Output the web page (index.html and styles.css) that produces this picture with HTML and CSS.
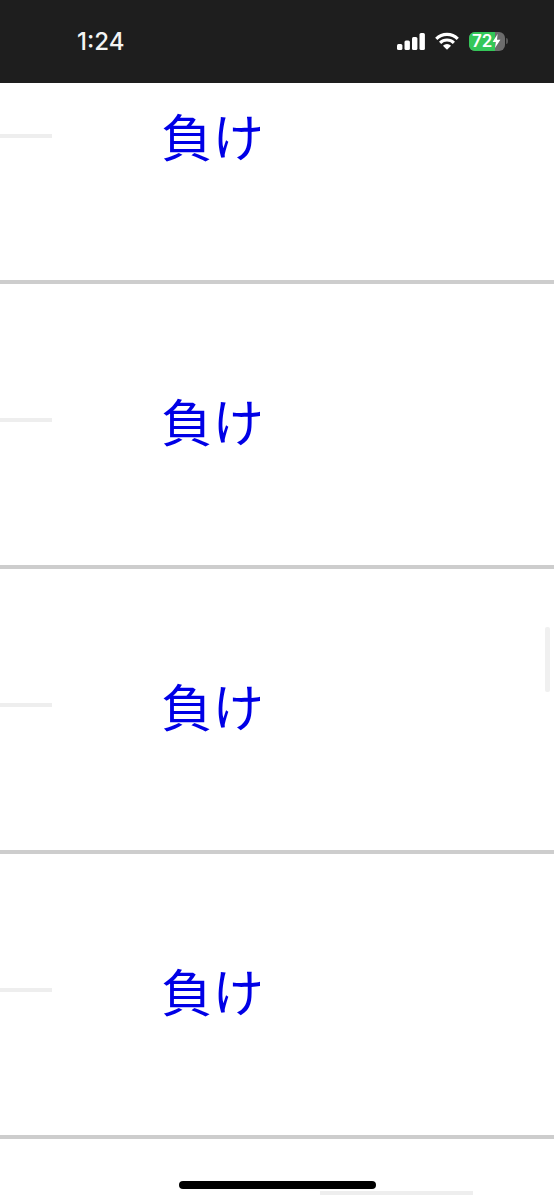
FILE: index.html
```html
<!DOCTYPE html>
<html lang="ja">
<head>
<meta charset="utf-8">
<title>負け</title>
<link rel="stylesheet" href="styles.css">
</head>
<body>
<header class="status">
  <span class="time">1:24</span>
  <div class="status-icons">
    <svg class="signal" width="28" height="17" viewBox="0 0 28 17"><rect x="0" y="11" width="5.4" height="6" rx="1.5"/><rect x="7.5" y="7.5" width="5.4" height="9.5" rx="1.5"/><rect x="15" y="4" width="5.4" height="13" rx="1.5"/><rect x="22.5" y="0" width="5.4" height="17" rx="1.5"/></svg>
    <svg class="wifi" width="24" height="18" viewBox="0 0 23 17"><path d="M1.2 6.4a14.6 14.6 0 0 1 20.6 0M4.9 10.2a9.4 9.4 0 0 1 13.2 0" fill="none" stroke="#fff" stroke-width="3"/><path d="M7.6 13a5.6 5.6 0 0 1 7.8 0l-3.9 4z" fill="#fff"/></svg>
    <div class="battery">
      <div class="battery-body">
        <div class="battery-fill"></div>
        <span class="battery-text">72</span>
        <svg class="bolt" width="9" height="14" viewBox="0 0 9 14"><path d="M5.6 0 0.6 8H3.8L3 14 8.4 5.8H5z" fill="#fff"/></svg>
      </div>
      <div class="battery-cap"></div>
    </div>
  </div>
</header>
<main class="list">
  <section class="row row-first"><div class="rule"></div><a class="link">負け</a></section>
  <section class="row"><div class="rule"></div><a class="link">負け</a></section>
  <section class="row"><div class="rule"></div><a class="link">負け</a></section>
  <section class="row"><div class="rule"></div><a class="link">負け</a></section>
  <div class="tail-rule"></div>
</main>
<div class="scrollbar"></div>
<div class="home-indicator"></div>
</body>
</html>
```
FILE: styles.css
```css
html, body {
  margin: 0;
  padding: 0;
  background: #fff;
}
body {
  position: relative;
  width: 554px;
  height: 1200px;
  overflow: hidden;
  font-family: "Noto Sans CJK JP", "Noto Sans", sans-serif;
}
.status {
  height: 83px;
  background: #1e1e1e;
  display: flex;
  align-items: center;
  justify-content: space-between;
  padding: 0 46px 0 77px;
  box-sizing: border-box;
}
.time {
  font-family: Inter, "Liberation Sans", sans-serif;
  font-size: 24px;
  font-weight: 500;
  color: #f4f4f4;
}
.status-icons {
  display: flex;
  align-items: center;
  gap: 10px;
  margin-top: -1px;
}
.signal { fill: #fff; }
.battery {
  display: flex;
  align-items: center;
  gap: 1px;
}
.battery-body {
  position: relative;
  width: 36px;
  height: 19px;
  border-radius: 6px;
  background: #6c6c6c;
  overflow: hidden;
  display: flex;
  align-items: center;
}
.battery-fill {
  position: absolute;
  left: 0;
  top: 0;
  bottom: 0;
  width: 26px;
  background: #34c759;
}
.battery-text {
  position: relative;
  margin-left: 3px;
  font-family: Inter, "Liberation Sans", sans-serif;
  font-size: 17px;
  font-weight: 600;
  line-height: 19px;
  color: #fff;
}
.bolt {
  position: relative;
  margin-left: 0;
}
.battery-cap {
  width: 2px;
  height: 6px;
  border-radius: 0 2px 2px 0;
  background: #555;
}
.row {
  height: 285px;
  box-sizing: border-box;
  border-bottom: 4px solid #cdcdcd;
  display: flex;
  align-items: center;
  padding-bottom: 9px;
}
.row-first {
  height: 201px;
  padding-bottom: 92px;
}
.rule {
  width: 52px;
  height: 4px;
  background: #eeeeee;
  margin-right: 109px;
}
.link {
  font-size: 51.5px;
  line-height: 60px;
  margin-bottom: 1px;
  color: #0000e6;
}
.tail-rule {
  width: 153px;
  height: 4px;
  margin: 52px 0 0 320px;
  background: #eeeeee;
}
.scrollbar {
  position: absolute;
  left: 545px;
  top: 627px;
  width: 5px;
  height: 65px;
  border-radius: 2px;
  background: #f0f0f0;
}
.home-indicator {
  position: absolute;
  left: 179px;
  top: 1181px;
  width: 197px;
  height: 8px;
  border-radius: 4px;
  background: #000;
}
```
